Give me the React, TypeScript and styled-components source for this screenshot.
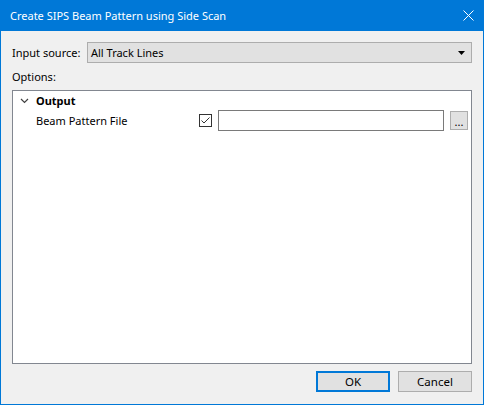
import React from "react";
import styled, { createGlobalStyle, css } from "styled-components";

const Global = createGlobalStyle`
  html, body { margin: 0; padding: 0; background: #f0f0f0; }
  body { font-family: "Noto Sans", "Segoe UI", sans-serif; font-size: 11px; color: #000; }
  * { box-sizing: border-box; }
`;

const Window = styled.div`
  width: 484px;
  height: 405px;
  border: 1px solid #0078d7;
  border-top: none;
  display: flex;
  flex-direction: column;
  background: #f0f0f0;
`;

const TitleBar = styled.div`
  height: 31px;
  margin: 0 -1px;
  background: #0078d7;
  color: #fff;
  display: flex;
  align-items: center;
  padding: 0 10px 0 10px;
  font-size: 11px;
`;

const Title = styled.div`
  flex: 1;
  padding-bottom: 1px;
`;

const CloseIcon = styled.svg`
  width: 11px;
  height: 11px;
`;

const Body = styled.div`
  flex: 1;
  display: flex;
  flex-direction: column;
  padding: 11px 11px 12px 11px;
`;

const SourceRow = styled.div`
  display: flex;
  align-items: center;
  height: 21px;
`;

const Label = styled.div`
  line-height: 16px;
  white-space: nowrap;
`;

const Combo = styled.div`
  margin-left: auto;
  width: 385px;
  height: 21px;
  background: #e1e1e1;
  border: 1px solid #adadad;
  display: flex;
  align-items: center;
  padding: 0 6px 0 3px;
`;

const ComboText = styled.div`
  flex: 1;
`;

const OptionsLabel = styled(Label)`
  margin-top: 6px;
  margin-bottom: 5px;
`;

const Panel = styled.div`
  flex: 1;
  background: #fff;
  border: 1px solid #828790;
  display: flex;
  flex-direction: column;
`;

const GroupRow = styled.div`
  height: 19px;
  display: flex;
  align-items: center;
  padding-left: 7px;
  font-weight: bold;
`;

const Chevron = styled.svg`
  width: 9px;
  height: 6px;
  margin-right: 7px;
`;

const PropRow = styled.div`
  height: 21px;
  display: flex;
  align-items: center;
  padding-left: 23px;
  padding-right: 3px;
`;

const PropName = styled.div`
  width: 163px;
  white-space: nowrap;
`;

const CheckBox = styled.div`
  width: 13px;
  height: 13px;
  border: 1px solid #333;
  background: #fff;
  display: flex;
  align-items: center;
  justify-content: center;
`;

const TextField = styled.div`
  margin-left: 6px;
  width: 226px;
  height: 21px;
  border: 1px solid #7a7a7a;
  background: #fff;
`;

const BrowseButton = styled.div`
  margin-left: auto;
  width: 18px;
  height: 19px;
  background: #e1e1e1;
  border: 1px solid #adadad;
  display: flex;
  align-items: center;
  justify-content: center;
  font-size: 11px;
  line-height: 11px;
  padding-top: 1px;
`;

const ButtonRow = styled.div`
  display: flex;
  justify-content: flex-end;
  gap: 8px;
  margin-top: 7px;
`;

const Button = styled.div<{ $default?: boolean }>`
  width: 74px;
  height: 21px;
  background: #e1e1e1;
  border: 1px solid #adadad;
  display: flex;
  align-items: center;
  justify-content: center;
  font-size: 11.5px;
  ${(p) =>
    p.$default &&
    css`
      border: 2px solid #0078d7;
    `}
`;

export default function App() {
  return (
    <>
      <Global />
      <Window>
        <TitleBar>
          <Title>Create SIPS Beam Pattern using Side Scan</Title>
          <CloseIcon viewBox="0 0 11 11">
            <path d="M0.5 0.5 L10.5 10.5 M10.5 0.5 L0.5 10.5" stroke="#fff" strokeWidth="1" fill="none" />
          </CloseIcon>
        </TitleBar>
        <Body>
          <SourceRow>
            <Label>Input source:</Label>
            <Combo>
              <ComboText>All Track Lines</ComboText>
              <svg width="7" height="4" viewBox="0 0 7 4">
                <path d="M0 0 H7 L3.5 4 Z" fill="#000" />
              </svg>
            </Combo>
          </SourceRow>
          <OptionsLabel>Options:</OptionsLabel>
          <Panel>
            <GroupRow>
              <Chevron viewBox="0 0 9 6">
                <path d="M1 1 L4.5 4.5 L8 1" stroke="#404040" strokeWidth="1.2" fill="none" />
              </Chevron>
              Output
            </GroupRow>
            <PropRow>
              <PropName>Beam Pattern File</PropName>
              <CheckBox>
                <svg width="11" height="11" viewBox="0 0 11 11">
                  <path d="M1.5 5.5 L4 8 L9.5 2.5" stroke="#333" strokeWidth="1" fill="none" />
                </svg>
              </CheckBox>
              <TextField />
              <BrowseButton>...</BrowseButton>
            </PropRow>
          </Panel>
          <ButtonRow>
            <Button $default>OK</Button>
            <Button>Cancel</Button>
          </ButtonRow>
        </Body>
      </Window>
    </>
  );
}
